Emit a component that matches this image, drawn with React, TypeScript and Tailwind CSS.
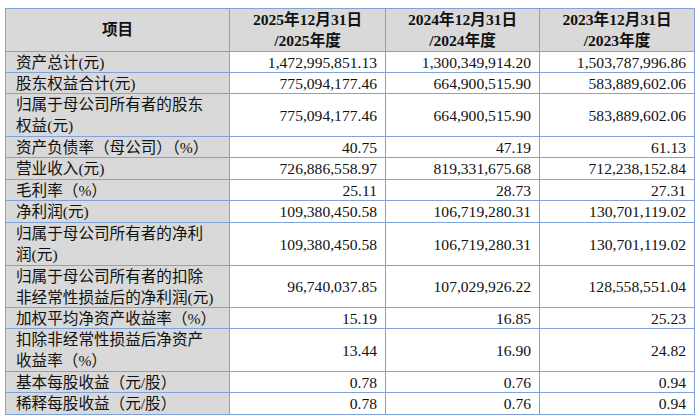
import React from "react";

type Row = { label: string[]; h: number; vals: string[] };

const rows: Row[] = [
  { label: ["资产总计(元)"], h: 20, vals: ["1,472,995,851.13", "1,300,349,914.20", "1,503,787,996.86"] },
  { label: ["股东权益合计(元)"], h: 20, vals: ["775,094,177.46", "664,900,515.90", "583,889,602.06"] },
  { label: ["归属于母公司所有者的股东", "权益(元)"], h: 42, vals: ["775,094,177.46", "664,900,515.90", "583,889,602.06"] },
  { label: ["资产负债率（母公司）（%）"], h: 20, vals: ["40.75", "47.19", "61.13"] },
  { label: ["营业收入(元)"], h: 21, vals: ["726,886,558.97", "819,331,675.68", "712,238,152.84"] },
  { label: ["毛利率（%）"], h: 20, vals: ["25.11", "28.73", "27.31"] },
  { label: ["净利润(元)"], h: 21, vals: ["109,380,450.58", "106,719,280.31", "130,701,119.02"] },
  { label: ["归属于母公司所有者的净利", "润(元)"], h: 42, vals: ["109,380,450.58", "106,719,280.31", "130,701,119.02"] },
  { label: ["归属于母公司所有者的扣除", "非经常性损益后的净利润(元)"], h: 41, vals: ["96,740,037.85", "107,029,926.22", "128,558,551.04"] },
  { label: ["加权平均净资产收益率（%）"], h: 20, vals: ["15.19", "16.85", "25.23"] },
  { label: ["扣除非经常性损益后净资产", "收益率（%）"], h: 42, vals: ["13.44", "16.90", "24.82"] },
  { label: ["基本每股收益（元/股）"], h: 20, vals: ["0.78", "0.76", "0.94"] },
  { label: ["稀释每股收益（元/股）"], h: 21, vals: ["0.78", "0.76", "0.94"] },
];

const headers = [
  ["2025年12月31日", "/2025年度"],
  ["2024年12月31日", "/2024年度"],
  ["2023年12月31日", "/2023年度"],
];

export default function App() {
  return (
    <div
      className="w-[700px] h-[416px] bg-white pt-[8px] pl-[5px] text-[15.6px] text-[#111111]"
      style={{ fontFamily: '"Liberation Serif", "Noto Sans CJK SC", serif' }}
    >
      <div className="grid w-[690px] grid-cols-[223px_155px_153px_154px] gap-px bg-[#7ea3d8] p-px">
        <div className="h-[42px] bg-[#d9d9d9] flex items-center justify-center font-bold">
          项目
        </div>
        {headers.map((h, i) => (
          <div
            key={i}
            className="h-[42px] bg-[#d9d9d9] flex flex-col items-center justify-center font-bold leading-[21px]"
          >
            <span>{h[0]}</span>
            <span>{h[1]}</span>
          </div>
        ))}
        {rows.map((r, i) => (
          <React.Fragment key={i}>
            <div
              className="bg-[#d9d9d9] flex flex-col justify-center pl-[10px] leading-[21px] whitespace-nowrap"
              style={{ height: r.h }}
            >
              {r.label.map((l, j) => (
                <span key={j}>{l}</span>
              ))}
            </div>
            {r.vals.map((v, j) => (
              <div
                key={j}
                className="bg-white flex items-center justify-end pr-[8px] leading-[21px]"
                style={{ height: r.h }}
              >
                {v}
              </div>
            ))}
          </React.Fragment>
        ))}
      </div>
    </div>
  );
}
